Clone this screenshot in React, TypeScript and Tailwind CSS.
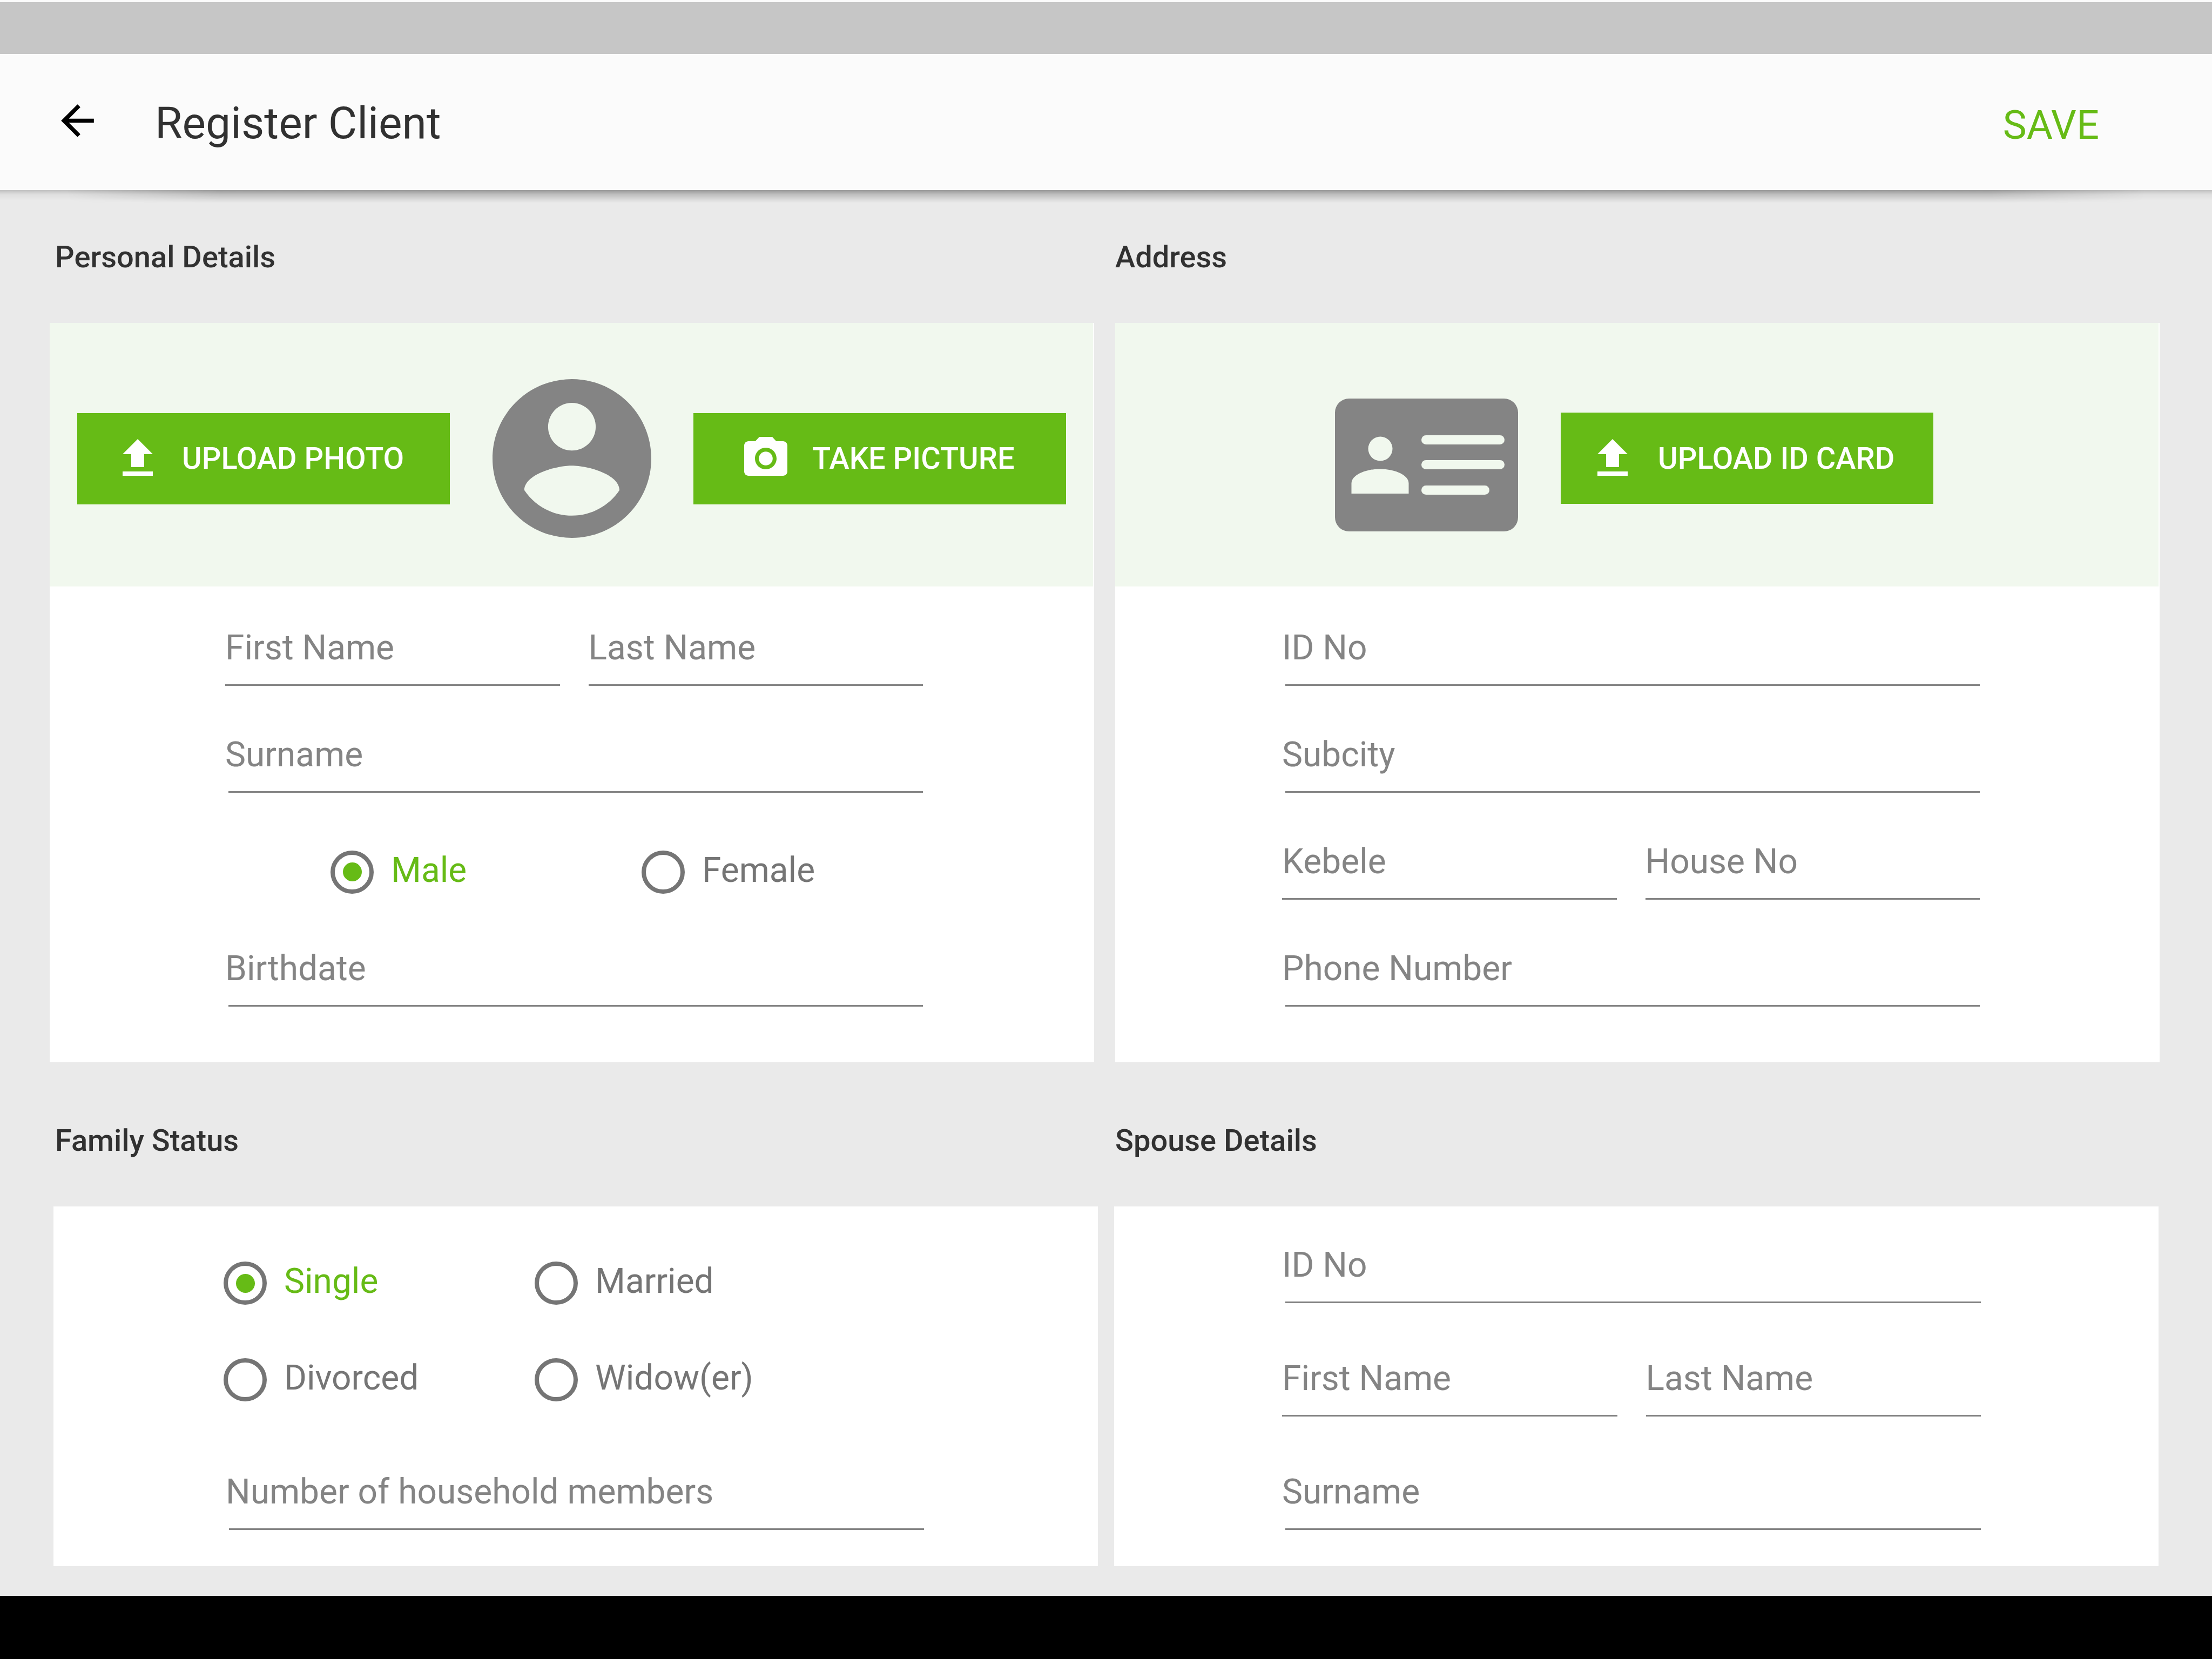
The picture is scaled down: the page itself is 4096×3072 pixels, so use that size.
import React, { useState } from "react";

function ArrowBackIcon() {
  return (
    <svg viewBox="0 0 24 24" className="size-[91px] fill-black" aria-hidden="true">
      <path d="M20 11H7.83l5.59-5.59L12 4l-8 8 8 8 1.41-1.41L7.83 13H20v-2z" />
    </svg>
  );
}

function UploadIcon() {
  return (
    <svg viewBox="0 0 24 24" className="size-24 shrink-0 fill-white" aria-hidden="true">
      <path d="M9 16h6v-6h4l-7-7-7 7h4zm-4 2h14v2H5z" />
    </svg>
  );
}

function CameraIcon() {
  return (
    <svg viewBox="0 0 24 24" className="size-24 shrink-0 fill-white" aria-hidden="true">
      <circle cx="12" cy="12" r="3.2" />
      <path d="M9 2L7.17 4H4c-1.1 0-2 .9-2 2v12c0 1.1.9 2 2 2h16c1.1 0 2-.9 2-2V6c0-1.1-.9-2-2-2h-3.17L15 2H9zm3 15c-2.76 0-5-2.24-5-5s2.24-5 5-5 5 2.24 5 5-2.24 5-5 5z" />
    </svg>
  );
}

function AvatarIcon() {
  return (
    <svg viewBox="2 2 20 20" className="size-[294px] shrink-0 fill-[#848484]" aria-hidden="true">
      <path d="M12 2C6.48 2 2 6.48 2 12s4.48 10 10 10 10-4.48 10-10S17.52 2 12 2zm0 3c1.66 0 3 1.34 3 3s-1.34 3-3 3-3-1.34-3-3 1.34-3 3-3zm0 14.2c-2.5 0-4.71-1.28-6-3.22.03-1.99 4-3.08 6-3.08 1.99 0 5.97 1.09 6 3.08-1.29 1.94-3.5 3.22-6 3.22z" />
    </svg>
  );
}

function IdCardIcon() {
  return (
    <svg viewBox="0 0 339 246" className="h-[246px] w-[339px] shrink-0" aria-hidden="true">
      <rect width="339" height="246" rx="26" className="fill-[#848484]" />
      <g className="fill-[#f1f8ee]">
        <circle cx="84" cy="93" r="22.5" />
        <path d="M30.500 176V157a53 26.500 0 0 1 106 0v19z" />
        <rect x="160" y="68" width="154" height="17" rx="8.5" />
        <rect x="160" y="114" width="154" height="17" rx="8.5" />
        <rect x="160" y="161" width="126" height="17" rx="8.5" />
      </g>
    </svg>
  );
}

function ActionButton({ icon, label, className }: { icon: React.ReactNode; label: string; className: string }) {
  return (
    <button
      type="button"
      className={`flex h-[169px] w-[690px] shrink-0 items-center bg-[#66bb16] text-[56px] leading-none font-medium whitespace-nowrap text-white ${className}`}
    >
      {icon}
      {label}
    </button>
  );
}

function Field({ label, half = false }: { label: string; half?: boolean }) {
  return (
    <label className="block min-w-0 flex-1">
      <input
        type="text"
        aria-label={label}
        placeholder={label}
        className="block h-[98px] w-full bg-transparent text-[64px] text-[#313131] outline-none placeholder:text-[#848484] placeholder:opacity-100"
      />
      <span className={`mt-[19px] block h-[3px] bg-[#848484] ${half ? "" : "ml-1.5"}`} />
    </label>
  );
}

function FieldPair({ labels }: { labels: [string, string] }) {
  return (
    <div className="flex gap-[53px]">
      <Field label={labels[0]} half />
      <Field label={labels[1]} half />
    </div>
  );
}

function RadioOption({
  name,
  label,
  value,
  onChange,
}: {
  name: string;
  label: string;
  value: string;
  onChange: (next: string) => void;
}) {
  return (
    <label className="flex h-20 items-center gap-8 text-[64px] leading-none whitespace-nowrap text-[#757575] has-checked:text-[#66bb16]">
      <input
        type="radio"
        name={name}
        checked={value === label}
        onChange={() => onChange(label)}
        className="grid size-20 shrink-0 appearance-none place-items-center rounded-full border-8 border-[#757575] before:size-[35px] before:rounded-full checked:before:bg-[#66bb16]"
      />
      <span className="pb-1.5">{label}</span>
    </label>
  );
}

function Section({
  title,
  headingClass,
  children,
}: {
  title: string;
  headingClass: string;
  children: React.ReactNode;
}) {
  return (
    <section className="flex min-w-0 flex-col">
      <h2 className={`mb-[90px] text-[56px] leading-[64px] font-medium text-[#313131] ${headingClass}`}>{title}</h2>
      <div className="flex-1 bg-white">{children}</div>
    </section>
  );
}

export default function App() {
  const [gender, setGender] = useState("Male");
  const [status, setStatus] = useState("Single");

  return (
    <div className="flex min-h-screen flex-col bg-[#eaeaea] font-[Roboto,sans-serif]">
      <div className="h-[100px] border-t-4 border-[#fbfbfb] bg-[#c6c6c6]" />

      <header className="relative flex h-[252px] items-center bg-[#fbfbfb] pr-[209px] pl-[98px]">
        <button type="button" aria-label="Back" className="mb-[5px]">
          <ArrowBackIcon />
        </button>
        <h1 className="ml-[98px] pt-1 text-[82px] leading-[96px] text-[#313131]">Register Client</h1>
        <button type="button" className="ml-auto pt-3 text-[74px] leading-[84px] text-[#66bb16]">
          SAVE
        </button>
        <div className="absolute inset-x-0 top-full h-5 bg-linear-to-b from-black/18 via-black/5 via-40% to-transparent" />
        <div className="absolute inset-x-0 top-full h-6 bg-linear-to-b from-black/20 via-black/13 via-40% to-transparent mask-x-from-90% mask-x-to-97%" />
      </header>

      <main className="flex-1 pt-[92px] pb-[55px]">
        <div className="grid grid-cols-2 gap-[39px] pr-[97px] pl-[92px]">
          <Section title="Personal Details" headingClass="pl-2.5">
            <div className="mr-0.5 flex items-center justify-between bg-[#f1f8ee] pt-[104px] pr-[50px] pb-[90px] pl-[51px]">
              <ActionButton icon={<UploadIcon />} label="UPLOAD PHOTO" className="gap-[34px] pl-16" />
              <AvatarIcon />
              <ActionButton icon={<CameraIcon />} label="TAKE PICTURE" className="gap-[38px] pl-[86px]" />
            </div>
            <div className="flex flex-col gap-[78px] pt-16 pr-[317px] pb-[103px] pl-[325px]">
              <FieldPair labels={["First Name", "Last Name"]} />
              <Field label="Surname" />
              <div
                role="radiogroup"
                aria-label="Gender"
                className="grid h-[120px] grid-cols-[576px_1fr] items-center pt-[17px] pl-[195px]"
              >
                <RadioOption name="gender" label="Male" value={gender} onChange={setGender} />
                <RadioOption name="gender" label="Female" value={gender} onChange={setGender} />
              </div>
              <Field label="Birthdate" />
            </div>
          </Section>

          <Section title="Address" headingClass="">
            <div className="mr-0.5 flex h-[488px] items-center justify-center gap-[79px] bg-[#f1f8ee] pt-[13px] pr-2.5">
              <div className="pt-6">
                <IdCardIcon />
              </div>
              <ActionButton icon={<UploadIcon />} label="UPLOAD ID CARD" className="gap-9 pl-12" />
            </div>
            <div className="flex flex-col gap-[78px] pt-16 pr-[333px] pb-[103px] pl-[309px]">
              <Field label="ID No" />
              <Field label="Subcity" />
              <FieldPair labels={["Kebele", "House No"]} />
              <Field label="Phone Number" />
            </div>
          </Section>
        </div>

        <div className="mt-[113px] grid grid-cols-2 gap-[30px] pr-[99px] pl-[99px]">
          <Section title="Family Status" headingClass="pl-[3px]">
            <div className="pt-[102px] pr-[322px] pb-[67px] pl-[319px]">
              <div
                role="radiogroup"
                aria-label="Family Status"
                className="-ml-1 mb-[118px] grid grid-cols-[576px_1fr] gap-y-[99px]"
              >
                <RadioOption name="status" label="Single" value={status} onChange={setStatus} />
                <RadioOption name="status" label="Married" value={status} onChange={setStatus} />
                <RadioOption name="status" label="Divorced" value={status} onChange={setStatus} />
                <RadioOption name="status" label="Widow(er)" value={status} onChange={setStatus} />
              </div>
              <Field label="Number of household members" />
            </div>
          </Section>

          <Section title="Spouse Details" headingClass="pl-0.5">
            <div className="flex flex-col gap-[90px] pt-[59px] pr-[329px] pb-[67px] pl-[311px]">
              <Field label="ID No" />
              <FieldPair labels={["First Name", "Last Name"]} />
              <Field label="Surname" />
            </div>
          </Section>
        </div>
      </main>

      <footer className="h-[117px] bg-black" />
    </div>
  );
}
